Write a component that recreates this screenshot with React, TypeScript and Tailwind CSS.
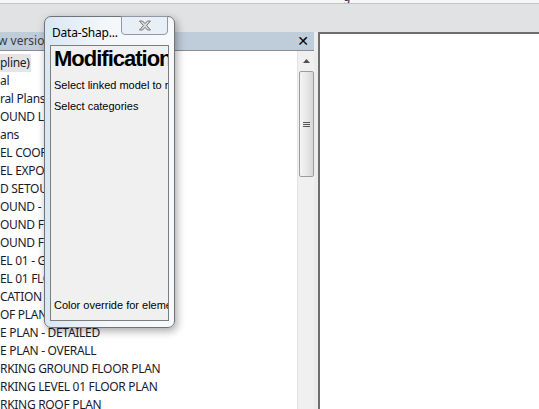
import React from "react";

const rows = [
  "pline)",
  "al",
  "ral Plans",
  "OUND LEVEL",
  "ans",
  "EL COORDINATION",
  "EL EXPORT",
  "D SETOUT",
  "OUND - GA",
  "OUND FLOOR",
  "OUND FLOOR",
  "EL 01 - GA",
  "EL 01 FLOOR",
  "CATION PLAN",
  "OF PLAN",
  "E PLAN - DETAILED",
  "E PLAN - OVERALL",
  "RKING GROUND FLOOR PLAN",
  "RKING LEVEL 01 FLOOR PLAN",
  "RKING ROOF PLAN",
];

function ScrollBar() {
  return (
    <div className="w-[17px] h-full bg-[#f0f0f0] border-l border-[#e4e4e4] flex flex-col items-center">
      <div className="h-[20px] w-full flex items-center justify-center">
        <svg width="7" height="4" viewBox="0 0 7 4">
          <path d="M0 4 L3.5 0 L7 4 Z" fill="#505050" />
        </svg>
      </div>
      <div className="w-[15px] h-[106px] rounded-[2px] border border-[#9c9c9c] bg-gradient-to-r from-[#f4f4f4] via-[#e8e8e8] to-[#d6d6d6] flex flex-col items-center justify-center gap-[1px]">
        <div className="w-[7px] h-[1px] bg-[#555]" />
        <div className="w-[7px] h-[1px] bg-[#555]" />
        <div className="w-[7px] h-[1px] bg-[#555]" />
      </div>
    </div>
  );
}

function FloatingDialog() {
  return (
    <div className="absolute left-[44px] top-[16px] w-[131px] h-[312px] rounded-[7px] border border-[#6f7479] bg-gradient-to-r from-[#d9e7f4] via-[#f4f8fb] to-[#f7f9fb] shadow-[2px_3px_8px_rgba(0,0,0,0.35)] font-['Liberation_Sans',sans-serif]">
      <div className="flex h-[28px]">
        <div className="pl-[7px] pt-[10px] text-[12px] leading-none text-black font-['Noto_Sans',sans-serif] tracking-[-0.2px]">
          Data-Shap...
        </div>
        <div className="ml-auto mr-[6px] w-[47px] h-[19px] -mt-px rounded-b-[4px] border border-[#8f98a4] bg-[#e9eff6] flex items-center justify-center">
          <svg width="14" height="11" viewBox="0 0 14 11">
            <path
              d="M1.5 1 L4.5 1 L7 3.6 L9.5 1 L12.5 1 L8.6 5.5 L12.5 10 L9.5 10 L7 7.4 L4.5 10 L1.5 10 L5.4 5.5 Z"
              fill="#d9d9d9"
              stroke="#6a6a6a"
              strokeWidth="0.9"
            />
          </svg>
        </div>
      </div>
      <div className="mx-[5px] h-[276px] border border-[#7d7d7d] bg-[#f0f0f0] flex flex-col overflow-hidden whitespace-nowrap">
        <div className="pl-[3px] pt-[2px] text-[22px] leading-[22px] font-bold tracking-[-1px] text-black">Modification</div>
        <div className="pl-[3px] mt-[10px] text-[11px] leading-none text-black">Select linked model to r</div>
        <div className="pl-[3px] mt-[10px] text-[11px] leading-none text-black">Select categories</div>
        <div className="pl-[3px] mt-auto mb-[9px] text-[11px] leading-none text-black">Color override for eleme</div>
      </div>
    </div>
  );
}

export default function App() {
  return (
    <div className="relative w-[539px] h-[409px] overflow-hidden bg-[#e1e2e3] font-['Noto_Sans',sans-serif]">
      <div className="h-[4px] bg-[#f7f7f7] border-b border-[#c3c3c3] relative overflow-hidden">
        <span className="absolute left-[343px] -top-[12px] text-[12px] text-[#333]">g</span>
      </div>

      <div className="flex mt-[28px] h-[377px]">
        <div className="w-[314px] flex flex-col">
          <div className="h-[18px] bg-[#bfcdda] flex items-center text-[12px] text-[#3c3c3c]">
            <span className="-ml-[2px]">w version</span>
            <span className="ml-auto mr-[5px] text-[14px] leading-none text-black font-['DejaVu_Sans',sans-serif]">✕</span>
          </div>
          <div className="h-[1px] bg-[#8c8c8c]" />
          <div className="flex-1 flex bg-white overflow-hidden">
            <div className="flex-1 pt-[3px] overflow-hidden">
              {rows.map((r, i) => (
                <div key={i} className="h-[18px] flex items-center">
                  <span
                    className={`-ml-[2px] pl-[2px] pr-[1px] h-[18px] leading-[18px] text-[12px] tracking-[-0.3px] text-[#1b1b2e] whitespace-nowrap ${
                      i === 0 ? "bg-[#e5e5e5]" : ""
                    }`}
                  >
                    {r}
                  </span>
                </div>
              ))}
            </div>
            <ScrollBar />
          </div>
        </div>
        <div className="w-[4px] bg-[#ececec]" />
        <div className="flex-1 bg-white border-l-2 border-t-2 border-[#6e6e6e]" />
      </div>

      <FloatingDialog />
    </div>
  );
}
